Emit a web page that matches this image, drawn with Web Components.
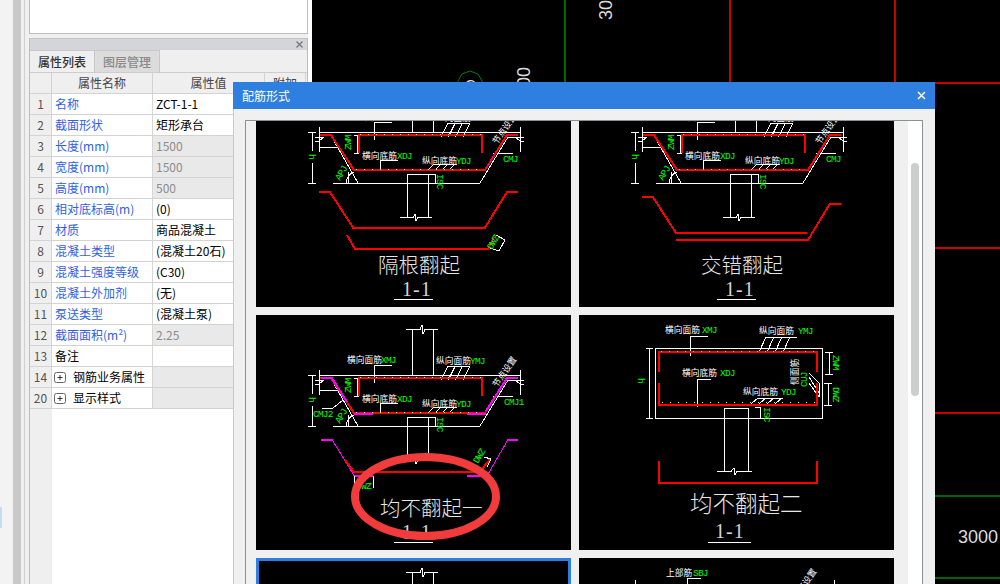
<!DOCTYPE html>
<html lang="zh">
<head>
<meta charset="utf-8">
<title>配筋形式</title>
<style>
  html, body { margin:0; height:584px; overflow:hidden; background:#f0f0f0; }
  body { font-family:"Noto Sans CJK SC","Liberation Sans",sans-serif; font-size:12px; }
</style>
</head>
<body>
<app-shell>
  <prop-panel slot="panel">
    <prop-row num="1" link>名称<span slot="value">ZCT-1-1</span></prop-row>
    <prop-row num="2" link>截面形状<span slot="value">矩形承台</span></prop-row>
    <prop-row num="3" link muted>长度(mm)<span slot="value">1500</span></prop-row>
    <prop-row num="4" link muted>宽度(mm)<span slot="value">1500</span></prop-row>
    <prop-row num="5" link muted>高度(mm)<span slot="value">500</span></prop-row>
    <prop-row num="6" link>相对底标高(m)<span slot="value">(0)</span></prop-row>
    <prop-row num="7" link>材质<span slot="value">商品混凝土</span></prop-row>
    <prop-row num="8" link>混凝土类型<span slot="value">(混凝土20石)</span></prop-row>
    <prop-row num="9" link>混凝土强度等级<span slot="value">(C30)</span></prop-row>
    <prop-row num="10" link>混凝土外加剂<span slot="value">(无)</span></prop-row>
    <prop-row num="11" link>泵送类型<span slot="value">(混凝土泵)</span></prop-row>
    <prop-row num="12" link muted>截面面积(m²)<span slot="value">2.25</span></prop-row>
    <prop-row num="13">备注</prop-row>
    <prop-row num="14" group muted>钢筋业务属性</prop-row>
    <prop-row num="20" group muted>显示样式</prop-row>
  </prop-panel>
  <cad-canvas slot="canvas"></cad-canvas>
  <rebar-dialog slot="overlay">
    <span slot="title">配筋形式</span>
    <rebar-card kind="root" heading="隔根翻起"></rebar-card>
    <rebar-card kind="staggered" heading="交错翻起"></rebar-card>
    <rebar-card kind="none1" heading="均不翻起一"></rebar-card>
    <rebar-card kind="none2" heading="均不翻起二"></rebar-card>
    <rebar-card kind="base" selected></rebar-card>
    <rebar-card kind="top"></rebar-card>
  </rebar-dialog>
  <red-ring slot="overlay"></red-ring>
</app-shell>

<script>
class AppShell extends HTMLElement {
  constructor() {
    super();
    this.attachShadow({ mode: 'open' });
    this.shadowRoot.innerHTML = `
      <style>
        :host { display:flex; position:relative; width:1000px; height:584px; overflow:hidden; }
        .edge { width:13px; background:#f3f3f3; position:relative; }
        .edge i { position:absolute; left:0; top:507px; width:2px; height:21px; background:#c8daf5; }
        .bar { width:8px; background:#c9c9c9; }
        .gutter { width:8px; background:#f0f0f0; box-sizing:border-box; padding-left:3px; }
        .gutter i { display:block; width:1px; height:100%; background:#cfcfcf; }
        .gap { width:4px; background:#fff; }
      </style>
      <div class="edge"><i></i></div>
      <div class="bar"></div>
      <div class="gutter"><i></i></div>
      <slot name="panel"></slot>
      <div class="gap"></div>
      <slot name="canvas"></slot>
      <slot name="overlay"></slot>
    `;
  }
}

class PropPanel extends HTMLElement {
  constructor() {
    super();
    this.attachShadow({ mode: 'open' });
    this.shadowRoot.innerHTML = `
      <style>
        :host { display:flex; flex-direction:column; width:279px; height:584px; box-sizing:border-box; background:#f0f0f0; }
        .preview { height:34px; box-sizing:border-box; background:#fff; border:1px solid #bdbdbd; border-top:0; }
        .body { flex:1; margin-top:4px; display:flex; flex-direction:column; border:1px solid #bdbdbd; border-width:0 1px; }
        .head { height:12px; box-sizing:border-box; background:#d4d5d9; border-top:1px solid #c4c4c8; position:relative; }
        .head svg { position:absolute; right:4px; top:2px; }
        .tabs { display:flex; height:23px; box-sizing:border-box; border-bottom:1px solid #cdcdcd; background:#efefef; color:#333; }
        .tab { width:65px; box-sizing:border-box; border-right:1px solid #c8c8c8; border-top:1px solid #c8c8c8; text-align:center; line-height:21px; font-weight:500; }
        .tab.off { background:#dcdcdc; color:#8a8a8a; }
        .cols { display:grid; grid-template-columns:22px 101px 112px 41px; height:21px; color:#444; background:#efefef; line-height:19px; text-align:center; }
        .cols div { border-right:1px solid #d3d3d3; border-bottom:1px solid #d3d3d3; }
        .rest { flex:1; background:#fff; position:relative; }
        .rest::before { content:""; display:block; width:22px; height:100%; background:#efefef; }
      </style>
      <div class="preview"></div>
      <div class="body">
        <div class="head">
          <svg width="7" height="7" viewBox="0 0 7 7"><path d="M.5.5l6 6M6.500.5l-6 6" stroke="#777" stroke-width="1.300" fill="none"/></svg>
        </div>
        <div class="tabs"><div class="tab">属性列表</div><div class="tab off">图层管理</div></div>
        <div class="cols"><div></div><div>属性名称</div><div>属性值</div><div>附加</div></div>
        <slot></slot>
        <div class="rest"></div>
      </div>
    `;
  }
}

class PropRow extends HTMLElement {
  constructor() {
    super();
    this.attachShadow({ mode: 'open' });
    const group = this.hasAttribute('group');
    const plus = group
      ? '<svg width="12" height="11" viewBox="0 0 12 11"><rect x=".5" y=".5" width="11" height="10" rx="2" fill="#fff" stroke="#666"/><path d="M3.500 5.500h5M6 3v5" stroke="#333" fill="none"/></svg>'
      : '';
    this.shadowRoot.innerHTML = `
      <style>
        :host { display:grid; grid-template-columns:22px 101px 112px 41px; height:21px; background:#fff; line-height:20px; color:#000; }
        .cell { box-sizing:border-box; height:21px; border-right:1px solid #d6d6d6; border-bottom:1px solid #d3d3d3; padding-left:3px; white-space:nowrap; overflow:hidden; }
        .num { background:#efefef; color:#555; padding:0; text-align:center; }
        :host([link]) .name { color:#2f5fe6; }
        :host([muted]) .val { background:#e9e9e9; color:#8c8c8c; }
        :host([group]) .name { display:flex; align-items:center; gap:7px; padding-left:2px; }
      </style>
      <div class="cell num">${this.getAttribute('num')}</div>
      <div class="cell name">${plus}<span><slot></slot></span></div>
      <div class="cell val"><slot name="value"></slot></div>
      <div class="cell"></div>
    `;
  }
}

class CadCanvas extends HTMLElement {
  constructor() {
    super();
    this.attachShadow({ mode: 'open' });
    this.shadowRoot.innerHTML = `
      <style>
        :host { display:block; flex:1; height:584px; background:#000; }
        svg { display:block; }
        text { font-family:"Liberation Sans",sans-serif; font-size:18px; fill:#dcdcdc; }
      </style>
      <svg width="688" height="584" viewBox="312 0 688 584">
        <g stroke="#c80000" stroke-width="2" fill="none" shape-rendering="crispEdges">
          <path d="M730 0V584M895 0V584M312 83H1000M312 248H1000M312 413H1000"/>
        </g>
        <g stroke="#006400" stroke-width="2" fill="none" shape-rendering="crispEdges">
          <path d="M565 0V584M312 496H1000M312 578H1000"/>
        </g>
        <polygon points="470,71 478,74 482,81 483,92 457,92 458,81 462,74" fill="none" stroke="#0a7a0a" stroke-width="1"/>
        <text x="465" y="90" style="font-size:15px">C</text>
        <text transform="translate(530 107) rotate(-90)">3000</text>
        <text transform="translate(612 20) rotate(-90)">30</text>
        <text x="958" y="543">3000</text>
      </svg>
    `;
  }
}

class RebarDialog extends HTMLElement {
  constructor() {
    super();
    this.attachShadow({ mode: 'open' });
    this.shadowRoot.innerHTML = `
      <style>
        :host { position:absolute; left:233px; top:82px; width:702px; height:502px; display:flex; flex-direction:column; background:#f0f0f0; box-sizing:border-box; border-left:1px solid #c9c9c9; }
        .title { height:27px; margin-left:-1px; flex:none; background:#2e7fe0; color:#fff; display:flex; align-items:center; justify-content:space-between; padding:0 9px; line-height:27px; }
        .body { flex:1; min-height:0; padding:11px 12px 0 11px; display:flex; }
        .box { flex:1; min-width:0; display:flex; border:1px solid #8b8f96; border-bottom:0; }
        .view { flex:1; overflow:hidden; padding-left:10px; }
        .cards { display:grid; grid-template-columns:315px 315px; grid-auto-rows:235px; gap:8px; margin-top:-49px; }
        .track { width:14px; background:#fff; flex:none; }
        .thumb { width:8px; height:233px; margin:42px 0 0 3px; border-radius:4px; background:#cdcdcd; }
      </style>
      <div class="title">
        <slot name="title"></slot>
        <svg width="9" height="9" viewBox="0 0 9 9"><path d="M1 1l7 7M8 1l-7 7" stroke="#fff" stroke-width="1.500" fill="none"/></svg>
      </div>
      <div class="body">
        <div class="box">
          <div class="view"><div class="cards"><slot></slot></div></div>
          <div class="track"><div class="thumb"></div></div>
        </div>
      </div>
    `;
  }
}

// drawing helpers, coordinates are px inside a 315x235 card
const lines = (d) => `<path d="${d}" stroke="#fff" fill="none"/>`;
const rebar = (d, w = 2) => `<path d="${d}" stroke="#f00" stroke-width="${w}" fill="none"/>`;
const pink = (d, w = 1) => `<path d="${d}" stroke="#f0f" stroke-width="${w}" fill="none"/>`;
const dots = (d) => `<path d="${d}" stroke="#ff0" stroke-dasharray="1 7" fill="none"/>`;
const zh = (x, y, s, rot) => `<text class="zh" ${rot ? `transform="translate(${x} ${y}) rotate(${rot})"` : `x="${x}" y="${y}"`}>${s}</text>`;
const tag = (x, y, s, rot) => `<text class="tag" ${rot ? `transform="translate(${x} ${y}) rotate(${rot})"` : `x="${x}" y="${y}"`}>${s}</text>`;
const hatch = (x, y, n, step, dx, dy) => {
  let d = '';
  for (let i = 0; i < n; i++) d += `M${x + i * step} ${y}l${dx} ${-dy}`;
  return d;
};

function columnTop() {
  return lines('M156 14V60M177 14V60M150 14.500H164L166 10L167 19L169 14.500H182');
}

function footing(magenta) {
  let s = columnTop();
  s += lines('M63 60H264M63 55V80M264 55V80M56 60V79M56 91V111M52 60.500H60M52 111.500H60');
  s += lines('M59 65H68L63 69H59M268 65H259L264 69H268');
  s += lines('M77 111.500H224M74 62L102 111M224 111L252 65H263M63 75H81M237 81H257');
  s += lines('M92 111V100M98 100Q91 103 90 111');
  s += lines('M151 111V102H172V145M151 111V145M144 145.500H157L159 142L160 149L162 145.500H176');
  s += lines('M172 102.500H180M179 102V111M173 111.500H183');
  s += lines('M118 68V50.500H136');
  s += lines('M192 51.500H214' + hatch(185, 65, 4, 7.300, 7, 14));
  s += lines('M124 99V88.500H142');
  s += lines('M178 92.500H201' + hatch(172, 98, 4, 7, 6, 6));
  s += lines('M98 63.500H103M98 81.500H103M101 63V81');
  s += rebar('M103 81V63H226V81');
  s += rebar('M64 63H75L98 98H229L251 63H262');
  if (magenta) {
    s += pink('M65 63H76L91 87', 2);
    s += pink('M98 98.500H117M211 98.500H230', 2);
    s += pink('M230 96L251 63H262', 2);
    s += lines('M66 93H77L87 85');
    s += tag(57, 102, 'CMJ2');
  }
  s += dots('M104 62.500H226M100 97.500H228');
  s += `<path d="M232 93L245 73" stroke="#f0f" stroke-dasharray="1 3" fill="none"/>`;
  s += zh(91, 48, '横向面筋') + tag(125, 48, 'XMJ');
  s += zh(180, 49, '纵向面筋') + tag(214, 49, 'YMJ');
  s += zh(106, 87, '横向底筋') + tag(141, 87, 'XDJ');
  s += zh(166, 92, '纵向底筋') + tag(200, 92, 'YDJ');
  s += zh(241, 73, '节点设置', -55);
  s += tag(95, 78, 'ZWM', -90);
  s += tag(53, 82, 'h', 90);
  s += tag(84, 109, 'APJ', -60);
  s += tag(181, 102, 'ISC', 90);
  if (!magenta) s += tag(247, 90, 'CMJ');
  else s += tag(248, 90, 'CMJ1');
  return s;
}

function boxFooting() {
  let s = '';
  s += lines('M76.500 33.500H243.500V103.500H76.500Z');
  s += lines('M70 33V104M67 33.500H74M67 103.500H74');
  s += lines('M250 37V59M246 37.500H254M246 59.500H254M249 68V91M245 68.500H253M245 90.500H253');
  s += lines('M111 41V21.500H129');
  s += lines('M187 22.500H218' + hatch(180, 37, 4, 8, 7, 15));
  s += lines('M118 92V64.500H132');
  s += lines('M178 83.500H204' + hatch(172, 89, 4, 8, 7, 6));
  s += lines('M145 104V93H169V156M145 104V156M138 156.500H152L155 153L156 160L158 156.500H173');
  s += lines('M176 92.500H182M181 93V104');
  s += lines('M230 58L240 68V82M230 62L240 78M230 68L240 82');
  s += rebar('M80 57V36.500H238V57');
  s += rebar('M80 68V89.500H238V68');
  s += rebar('M80 146V167.500H238V146');
  s += dots('M82 36H236M83 87H236');
  s += zh(86, 18, '横向面筋') + tag(123, 18, 'XMJ');
  s += zh(180, 19, '纵向面筋') + tag(219, 19, 'YMJ');
  s += zh(103, 61, '横向底筋') + tag(141, 61, 'XDJ');
  s += zh(164, 80, '纵向底筋') + tag(202, 80, 'YDJ');
  s += zh(219, 70, '侧面筋', -90);
  s += tag(228, 72, 'CUJ', -90);
  s += tag(59, 63, 'h', 90);
  s += tag(254, 40, 'ZWM', 90);
  s += tag(254, 72, 'DWZ', 90);
  s += tag(185, 92, 'ISC', 90);
  return s;
}

const DRAWINGS = {
  root() {
    return footing(false)
      + rebar('M63 120H74L97 155.500H229L251 120H262')
      + rebar('M91 163L99 177H232L238 165')
      + lines('M240 163L249 168L243 179L234 176')
      + tag(236, 178, 'DWZ', -60);
  },
  staggered() {
    return footing(false)
      + rebar('M63 125H74L97 161H228')
      + rebar('M97 168H229L251 131.500H262');
  },
  none1() {
    return footing(true)
      + pink('M65 124.500H76L98 160.500H117', 1)
      + pink('M65 124.500H76', 2) + pink('M98 161H117', 2)
      + pink('M211 161H231L252 124.500H262', 1)
      + pink('M252 124.500H262', 2) + pink('M211 161H231', 2)
      + rebar('M89 145L98 157H224L234 144')
      + lines('M151 111V145M172 111V145')
      + lines('M98 161V173M117 161V173M228 142L235 144L231 152')
      + tag(105, 174, 'WZ')
      + tag(222, 149, 'DWZ', -60);
  },
  none2: () => boxFooting(),
  base: () => columnTop() + lines('M156 14V40M177 14V40'),
  top() {
    return zh(87, 18, '上部筋') + tag(114, 18, 'SBJ')
      + lines('M108 34V20.500H122M56 22V34M255 22V34')
      + zh(218, 42, '节点设置', -55);
  }
};

const HEADINGS = {
  root: { x: 122, size: 20.500 },
  staggered: { x: 122, size: 20.500 },
  none1: { x: 124, size: 20.500 },
  none2: { x: 111, size: 22.500 }
};

class RebarCard extends HTMLElement {
  constructor() {
    super();
    this.attachShadow({ mode: 'open' });
    const kind = this.getAttribute('kind');
    const heading = this.getAttribute('heading');
    const h = HEADINGS[kind];
    let caption = '';
    if (heading) {
      const big = kind === 'none2';
      caption = `
        <text class="cap" x="${h.x}" y="${big ? 197 : 201}" style="font-size:${h.size}px">${heading}</text>
        <text class="num" x="${big ? 136 : 146}" y="${big ? 223 : 224}">1-1</text>
        <path d="M${big ? 129 : 138} 227.500H${big ? 172 : 177}" stroke="#fff" fill="none"/>`;
    }
    this.shadowRoot.innerHTML = `
      <style>
        :host { display:block; width:315px; height:235px; background:#000; overflow:hidden; }
        :host([selected]) { outline:3px solid #2e7fe0; outline-offset:-3px; }
        svg { display:block; }
        path { shape-rendering:crispEdges; }
        .zh { font-family:"Noto Sans CJK SC",sans-serif; font-size:8.750px; fill:#fff; }
        .tag { font-family:"Liberation Mono",monospace; font-size:9.500px; letter-spacing:-.8px; fill:#0f0; }
        .cap { font-family:"Noto Sans CJK SC",sans-serif; font-weight:300; fill:#e6e6e6; }
        .num { font-family:"Liberation Serif",serif; font-size:20px; letter-spacing:1px; fill:#d4d4d4; }
      </style>
      <svg width="315" height="235" viewBox="0 0 315 235">${DRAWINGS[kind]()}${caption}</svg>
    `;
  }
}

// hand drawn annotation over the screenshot
class RedRing extends HTMLElement {
  constructor() {
    super();
    this.attachShadow({ mode: 'open' });
    this.shadowRoot.innerHTML = `
      <style>
        :host { position:absolute; left:350px; top:452px; width:152px; height:90px; }
        svg { display:block; }
      </style>
      <svg width="152" height="90" viewBox="0 0 152 90">
        <ellipse cx="75.500" cy="44.500" rx="70.500" ry="39.500" fill="none" stroke="#f23c3c" stroke-width="8"/>
      </svg>
    `;
  }
}

customElements.define('app-shell', AppShell);
customElements.define('prop-panel', PropPanel);
customElements.define('prop-row', PropRow);
customElements.define('cad-canvas', CadCanvas);
customElements.define('rebar-dialog', RebarDialog);
customElements.define('rebar-card', RebarCard);
customElements.define('red-ring', RedRing);
</script>
</body>
</html>
